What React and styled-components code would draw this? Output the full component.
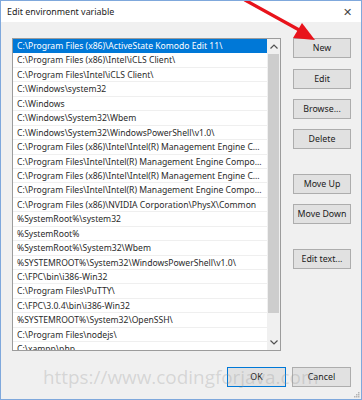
import React from 'react'
import styled, { createGlobalStyle } from 'styled-components'

const GlobalStyle = createGlobalStyle`
  html, body { margin: 0; padding: 0; background: #ffffff; }
  body { font-family: "Noto Sans", "Open Sans", sans-serif; }
  * { box-sizing: border-box; }
`

const Window = styled.div`
  position: relative;
  width: 362px;
  height: 400px;
  border: 1px solid #7fa8dc;
  display: flex;
  flex-direction: column;
  overflow: hidden;
`

const TitleBar = styled.div`
  height: 21px;
  background: #ffffff;
  display: flex;
  align-items: center;
  justify-content: space-between;
  padding: 0 9px 0 6px;
  font-size: 8.9px;
  color: #1b1b1b;
`

const CloseX = styled.span`
  font-size: 11px;
  color: #444;
  line-height: 1;
`

const Body = styled.div`
  flex: 1;
  background: #f0f0f0;
  padding: 16px 10px 0 11px;
  display: flex;
  flex-direction: column;
`

const MainRow = styled.div`
  display: flex;
  gap: 12px;
`

const ListBox = styled.div`
  width: 269px;
  height: 313px;
  border: 1px solid #9c9c9c;
  background: #ffffff;
  display: flex;
  overflow: hidden;
`

const Rows = styled.div`
  flex: 1;
  min-width: 0;
`

const Row = styled.div`
  height: 14.45px;
  line-height: 14px;
  padding: 0 4px 0 4px;
  font-size: 8.6px;
  white-space: nowrap;
  overflow: hidden;
  text-overflow: ellipsis;
  color: ${p => (p.$selected ? '#ffffff' : '#2a2a2a')};
  background: ${p => (p.$selected ? '#0078d7' : 'transparent')};
  border-bottom: 1px solid ${p => (p.$selected ? '#0078d7' : '#efefef')};
`

const ScrollBar = styled.div`
  width: 13px;
  background: #f0f0f0;
  display: flex;
  flex-direction: column;
  align-items: center;
`

const ScrollArrow = styled.div`
  height: 15px;
  width: 100%;
  display: flex;
  align-items: center;
  justify-content: center;
`

const ScrollTrack = styled.div`
  flex: 1;
  width: 100%;
  padding: 0 1px;
`

const Thumb = styled.div`
  height: 259px;
  background: #cdcdcd;
`

const ButtonColumn = styled.div`
  width: 58px;
  display: flex;
  flex-direction: column;
`

const Button = styled.div`
  width: ${p => p.$width || 58}px;
  height: 20px;
  margin-top: ${p => p.$top || 0}px;
  background: #e1e1e1;
  border: 1px solid ${p => (p.$default ? '#0078d7' : '#adadad')};
  display: flex;
  align-items: center;
  justify-content: center;
  font-size: 8.8px;
  white-space: nowrap;
  color: #1b1b1b;
`

const Footer = styled.div`
  display: flex;
  justify-content: flex-end;
  gap: 6px;
  margin-top: 16px;
`

const Watermark = styled.div`
  position: absolute;
  left: 42px;
  top: 363px;
  font-family: "Open Sans", sans-serif;
  font-size: 18.9px;
  letter-spacing: 0;
  color: rgba(150, 150, 150, 0.3);
  pointer-events: none;
`

const Arrow = styled.svg`
  position: absolute;
  left: 0;
  top: 0;
  pointer-events: none;
`

const Grip = styled.svg`
  position: absolute;
  right: 1px;
  bottom: 1px;
`

const paths = [
  'C:\\Program Files (x86)\\ActiveState Komodo Edit 11\\',
  'C:\\Program Files (x86)\\Intel\\iCLS Client\\',
  'C:\\Program Files\\Intel\\iCLS Client\\',
  'C:\\Windows\\system32',
  'C:\\Windows',
  'C:\\Windows\\System32\\Wbem',
  'C:\\Windows\\System32\\WindowsPowerShell\\v1.0\\',
  'C:\\Program Files (x86)\\Intel\\Intel(R) Management Engine Components\\DAL',
  'C:\\Program Files\\Intel\\Intel(R) Management Engine Components\\DAL',
  'C:\\Program Files (x86)\\Intel\\Intel(R) Management Engine Components\\IPT',
  'C:\\Program Files\\Intel\\Intel(R) Management Engine Components\\IPT',
  'C:\\Program Files (x86)\\NVIDIA Corporation\\PhysX\\Common',
  '%SystemRoot%\\system32',
  '%SystemRoot%',
  '%SystemRoot%\\System32\\Wbem',
  '%SYSTEMROOT%\\System32\\WindowsPowerShell\\v1.0\\',
  'C:\\FPC\\bin\\i386-Win32',
  'C:\\Program Files\\PuTTY\\',
  'C:\\FPC\\3.0.4\\bin\\i386-Win32',
  '%SYSTEMROOT%\\System32\\OpenSSH\\',
  'C:\\Program Files\\nodejs\\',
  'C:\\xampp\\php',
]

export default function App() {
  return (
    <Window>
      <GlobalStyle />
      <TitleBar>
        <span>Edit environment variable</span>
        <CloseX>✕</CloseX>
      </TitleBar>
      <Body>
        <MainRow>
          <ListBox>
            <Rows>
              {paths.map((p, i) => (
                <Row key={i} $selected={i === 0}>{p}</Row>
              ))}
            </Rows>
            <ScrollBar>
              <ScrollArrow>
                <svg width="8" height="5" viewBox="0 0 8 5">
                  <path d="M0.5 4.5 L4 1 L7.5 4.5" fill="none" stroke="#505050" strokeWidth="1.2" />
                </svg>
              </ScrollArrow>
              <ScrollTrack>
                <Thumb />
              </ScrollTrack>
              <ScrollArrow>
                <svg width="8" height="5" viewBox="0 0 8 5">
                  <path d="M0.5 0.5 L4 4 L7.5 0.5" fill="none" stroke="#505050" strokeWidth="1.2" />
                </svg>
              </ScrollArrow>
            </ScrollBar>
          </ListBox>
          <ButtonColumn>
            <Button>New</Button>
            <Button $top={11}>Edit</Button>
            <Button $top={10}>Browse...</Button>
            <Button $top={10}>Delete</Button>
            <Button $top={25}>Move Up</Button>
            <Button $top={10}>Move Down</Button>
            <Button $top={25}>Edit text...</Button>
          </ButtonColumn>
        </MainRow>
        <Footer>
          <Button $default $width={59}>OK</Button>
          <Button $width={59}>Cancel</Button>
        </Footer>
      </Body>
      <Watermark>https://www.codingforjava.com</Watermark>
      <Arrow width="362" height="60" viewBox="0 0 362 60">
        <path d="M244 -1 L300 30" stroke="#e8131b" strokeWidth="3.2" strokeLinecap="round" />
        <path d="M314 39 L292 37 L301 22 Z" fill="#e8131b" />
      </Arrow>
      <Grip width="6" height="6" viewBox="0 0 6 6">
        <rect x="4" y="0" width="1.5" height="1.5" fill="#b5b5b5" />
        <rect x="2" y="2" width="1.5" height="1.5" fill="#b5b5b5" />
        <rect x="4" y="2" width="1.5" height="1.5" fill="#b5b5b5" />
        <rect x="0" y="4" width="1.5" height="1.5" fill="#b5b5b5" />
        <rect x="2" y="4" width="1.5" height="1.5" fill="#b5b5b5" />
        <rect x="4" y="4" width="1.5" height="1.5" fill="#b5b5b5" />
      </Grip>
    </Window>
  )
}
